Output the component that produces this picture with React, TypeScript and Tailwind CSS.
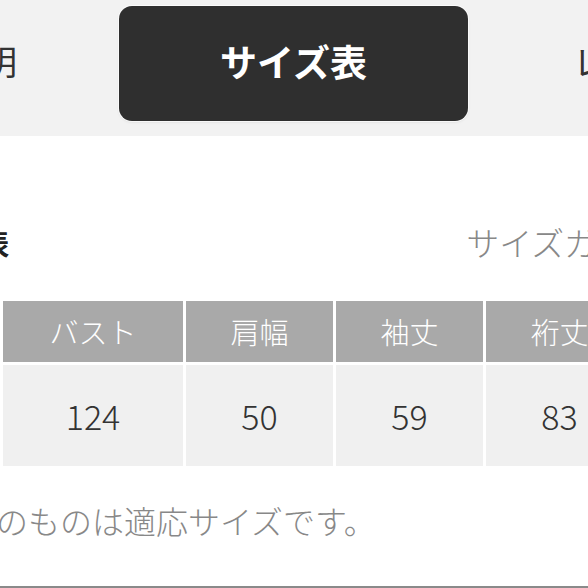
const jp = { fontFamily: '"Noto Sans CJK JP", "Noto Sans", sans-serif' };

const columns = [
  { label: "バスト", value: "124", width: "w-[180px]" },
  { label: "肩幅", value: "50", width: "w-[147px]" },
  { label: "袖丈", value: "59", width: "w-[147px]" },
  { label: "裄丈", value: "83", width: "w-[147px]" },
];

const App = () => {
  return (
    <div className="w-[588px] h-[588px] overflow-hidden bg-white flex flex-col" style={jp}>
      {/* tabs */}
      <div className="h-[136px] bg-[#f2f2f2] flex items-start shrink-0 whitespace-nowrap">
        <span className="ml-[-51px] mt-[44px] text-[34px] leading-none text-[#333]">説明</span>
        <div className="ml-[102px] mt-[6px] w-[349px] h-[115px] rounded-[13px] bg-[#2f2f2f] ring-1 ring-white/80 shadow flex items-center justify-center shrink-0">
          <span className="mb-[5px] text-[37px] font-bold leading-none text-white">サイズ表</span>
        </div>
        <span className="ml-[105px] mt-[44px] text-[34px] leading-none text-[#333]">レビュー</span>
      </div>

      {/* title */}
      <div className="mt-[90px] flex items-center whitespace-nowrap">
        <span className="ml-[-102px] text-[28px] font-bold leading-none text-[#222]">サイズ表</span>
        <span className="ml-[457px] text-[33px] font-light leading-none text-[#888]">サイズガイド</span>
      </div>

      {/* table */}
      <div className="mt-[42px] flex gap-[3px] pl-[3px] shrink-0">
        {columns.map((col) => (
          <div key={col.label} className={`${col.width} shrink-0 flex flex-col gap-[3px]`}>
            <div className="h-[61px] bg-[#a9a9a9] flex items-center justify-center text-[29px] font-light text-white leading-none">
              {col.label}
            </div>
            <div className="h-[101px] bg-[#f0f0f0] flex items-center justify-center text-[34px] font-light text-[#333] leading-none">
              {col.value}
            </div>
          </div>
        ))}
      </div>

      {/* note */}
      <div className="mt-[38px] ml-[-4px] text-[32px] font-light leading-none text-[#888] whitespace-nowrap">
        のものは適応サイズです。
      </div>

      <div className="mt-auto h-[2px] bg-[#8a8a8a] shrink-0" />
    </div>
  );
};

export default App;
